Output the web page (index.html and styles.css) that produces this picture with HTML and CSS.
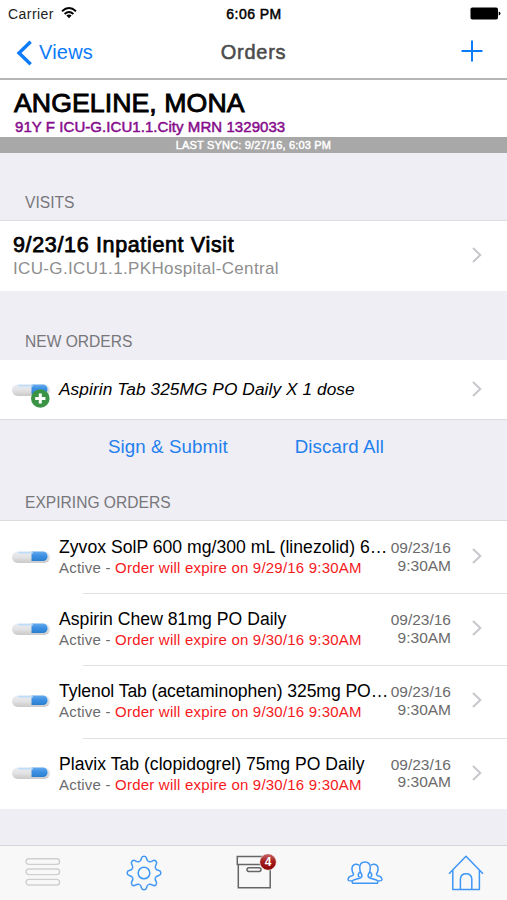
FILE: index.html
```html
<!DOCTYPE html>
<html lang="en">
<head>
<meta charset="utf-8">
<title>Orders</title>
<link rel="stylesheet" href="styles.css">
</head>
<body>
<svg class="defs" width="0" height="0" aria-hidden="true">
  <defs>
    <linearGradient id="shell" x1="0" y1="0" x2="0" y2="1">
      <stop offset="0" stop-color="#e9eef4"/><stop offset=".5" stop-color="#e2e2e3"/><stop offset="1" stop-color="#c9c9ca"/>
    </linearGradient>
    <linearGradient id="blue" x1="0" y1="0" x2="0" y2="1">
      <stop offset="0" stop-color="#65aaf0"/><stop offset=".45" stop-color="#3d91e3"/><stop offset="1" stop-color="#2b7fce"/>
    </linearGradient>
    <linearGradient id="red" x1="0" y1="0" x2="0" y2="1">
      <stop offset="0" stop-color="#c96a6a"/><stop offset=".48" stop-color="#a51a1c"/><stop offset="1" stop-color="#8b0508"/>
    </linearGradient>
    <symbol id="pill" viewBox="0 0 40 30">
      <rect x="1" y="9.5" width="38" height="11.5" rx="5.7" fill="url(#shell)"/>
      <path d="M20.5 9.5h12.5q3.5 1 3.5 4.7t-3.5 4.8H20.5z" fill="url(#blue)"/>
      <path d="M8 10.7h13" stroke="#bfdcf7" stroke-width="1.8" stroke-linecap="round"/>
    </symbol>
    <symbol id="chevron" viewBox="0 0 12 18">
      <path d="M2 2l7.3 7L2 16" fill="none" stroke="#c7c7cc" stroke-width="2"/>
    </symbol>
    <path id="tooth" d="M-4.7-11.4C-3.1-12.06-2.9-13-2.5-14.8Q-2.1-16.8 0-16.8Q2.1-16.8 2.5-14.8C2.9-13 3.1-12.06 4.7-11.4"/>
  </defs>
</svg>
<div class="screen">
  <header class="top">
    <div class="status">
      <div class="carrier"><span>Carrier</span>
        <svg width="16" height="12" viewBox="0 0 16 12" fill="none" stroke="#000" stroke-width="1.9"><path d="M1 4.2Q8-2.1 15 4.2M3.6 7Q8 3 12.4 7"/><path d="M8 11.2L5.4 8.6Q8 6.6 10.6 8.6z" fill="#000" stroke="none"/></svg>
      </div>
      <div class="time">6:06 PM</div>
      <svg class="battery" width="31" height="13" viewBox="0 0 31 13"><rect x="0.5" y="0.5" width="27.5" height="12" rx="1.8"/><path d="M28.7 4.5q1.8.3 1.8 2t-1.8 2z"/></svg>
    </div>
    <nav class="nav">
      <a class="back"><svg width="17" height="26" viewBox="0 0 17 26"><path d="M14.7 1.7L3 13l11.7 11.3" fill="none" stroke="#0c7bfa" stroke-width="3.4"/></svg><span>Views</span></a>
      <h1>Orders</h1>
      <svg class="add" width="22" height="22" viewBox="0 0 22 22"><path d="M11 .5v21M.5 11h21" stroke="#0c7bfa" stroke-width="2"/></svg>
    </nav>
  </header>
  <section class="patient">
    <h2>ANGELINE, MONA</h2>
    <p>91Y F ICU-G.ICU1.1.City MRN 1329033</p>
  </section>
  <div class="sync">LAST SYNC: 9/27/16, 6:03 PM</div>
  <h3 class="label visits">VISITS</h3>
  <div class="visit">
    <div class="visit-text"><div class="visit-title">9/23/16 Inpatient Visit</div><div class="visit-place">ICU-G.ICU1.1.PKHospital-Central</div></div>
    <svg class="chev"><use href="#chevron"/></svg>
  </div>
  <h3 class="label new">NEW ORDERS</h3>
  <div class="order new-order">
    <svg class="pill"><use href="#pill"/><circle cx="29.3" cy="23.5" r="9.3" fill="#3b9445"/><path d="M29.3 18.4v10.2M24.2 23.5h10.2" stroke="#fff" stroke-width="3"/></svg>
    <div class="draft">Aspirin Tab 325MG PO Daily X 1 dose</div>
    <svg class="chev"><use href="#chevron"/></svg>
  </div>
  <div class="actions"><a>Sign &amp; Submit</a><a>Discard All</a></div>
  <h3 class="label expiring">EXPIRING ORDERS</h3>
  <div class="list">
    <div class="order">
      <svg class="pill"><use href="#pill"/></svg>
      <div class="info"><div class="name">Zyvox SolP 600 mg/300 mL (linezolid) 6…</div><div class="state">Active - <em>Order will expire on 9/29/16 9:30AM</em></div></div>
      <div class="date">09/23/16<br>9:30AM</div>
      <svg class="chev"><use href="#chevron"/></svg>
    </div>
    <div class="order">
      <svg class="pill"><use href="#pill"/></svg>
      <div class="info"><div class="name">Aspirin Chew 81mg PO Daily</div><div class="state">Active - <em>Order will expire on 9/30/16 9:30AM</em></div></div>
      <div class="date">09/23/16<br>9:30AM</div>
      <svg class="chev"><use href="#chevron"/></svg>
    </div>
    <div class="order">
      <svg class="pill"><use href="#pill"/></svg>
      <div class="info"><div class="name tight">Tylenol Tab (acetaminophen) 325mg PO…</div><div class="state">Active - <em>Order will expire on 9/30/16 9:30AM</em></div></div>
      <div class="date">09/23/16<br>9:30AM</div>
      <svg class="chev"><use href="#chevron"/></svg>
    </div>
    <div class="order">
      <svg class="pill"><use href="#pill"/></svg>
      <div class="info"><div class="name">Plavix Tab (clopidogrel) 75mg PO Daily</div><div class="state">Active - <em>Order will expire on 9/30/16 9:30AM</em></div></div>
      <div class="date">09/23/16<br>9:30AM</div>
      <svg class="chev"><use href="#chevron"/></svg>
    </div>
  </div>
  <footer class="tabs">
    <svg width="36" height="36" viewBox="0 0 36 36" fill="none" stroke="#cfcfcf" stroke-width="1.4"><rect x="1" y="4.8" width="33.6" height="5.6" rx="2.8"/><rect x="1" y="15" width="33.6" height="5.6" rx="2.8"/><rect x="1" y="25.4" width="33.6" height="5.6" rx="2.8"/></svg>
    <svg width="36" height="36" viewBox="-18 -18 36 36" fill="none" stroke="#3f96f5" stroke-width="1.5"><use href="#tooth"/><use href="#tooth" transform="rotate(45)"/><use href="#tooth" transform="rotate(90)"/><use href="#tooth" transform="rotate(135)"/><use href="#tooth" transform="rotate(180)"/><use href="#tooth" transform="rotate(225)"/><use href="#tooth" transform="rotate(270)"/><use href="#tooth" transform="rotate(315)"/><circle r="5.8"/></svg>
    <div class="box">
      <svg width="36" height="36" viewBox="0 0 36 36" fill="none" stroke="#666" stroke-width="1.5"><path d="M1.3 2.5h33v8h-33zM2.3 10.5v23.3h31.9V10.5"/><rect x="11" y="13.7" width="14" height="3.8" rx="1.9"/></svg>
      <span class="badge"><svg width="18" height="18" viewBox="0 0 18 18"><circle cx="9" cy="9" r="8.3" fill="url(#red)" stroke="#fff" stroke-width=".6"/></svg><b>4</b></span>
    </div>
    <svg width="36" height="36" viewBox="0 0 36 36" fill="none" stroke="#3f96f5" stroke-width="1.5" stroke-linejoin="round"><path d="M5.5 28.2Q4.2 25.6 7.3 24.7L12.5 23.3Q15.6 22.3 14.8 19.8Q12.5 17 12.7 12.2Q13 6.9 18 6.9T23.3 12.2Q23.5 17 21.2 19.8Q20.4 22.3 23.5 23.3L28.7 24.7Q31.8 25.6 30.5 28.2z"/><path d="M12.3 10.6Q10.9 8.8 8.4 9.3Q4.6 10.2 5 14.6Q5.2 17 6.4 18.7Q7 20.4 3.4 21.3Q.7 22.3 1.2 25Q1.3 26.1 4.8 25.8M12.6 17Q12.1 18.2 11.3 19.2Q10.9 21.3 12.7 22.2M23.7 10.6Q25.1 8.8 27.6 9.3Q31.4 10.2 31 14.6Q30.8 17 29.6 18.7Q29 20.4 32.6 21.3Q35.3 22.3 34.8 25Q34.7 26.1 31.2 25.8M23.4 17Q23.9 18.2 24.7 19.2Q25.1 21.3 23.3 22.2"/></svg>
    <svg width="36" height="36" viewBox="0 0 36 36" fill="none" stroke="#3f96f5" stroke-width="1.5" stroke-linejoin="round"><path d="M1 18.8L18 1.2l17 17.6M4.8 15.2v19.3h26.6V15.2M12.4 34.5V24Q12.8 18.8 18.1 18.8T23.8 24v10.5"/></svg>
  </footer>
</div>
</body>
</html>
```

FILE: styles.css
```css
* { box-sizing: border-box; margin: 0; padding: 0; }
body {
  width: 507px;
  height: 900px;
  overflow: hidden;
  background: #efeef4;
  color: #000;
  font-family: "Liberation Sans", Arial, sans-serif;
}
svg { display: block; flex: none; }
.defs { position: absolute; }
.screen { display: flex; flex-direction: column; height: 900px; }

.top { height: 80px; background: #fff; border-bottom: 2px solid #b5b5b5; }
.status {
  display: grid;
  grid-template-columns: 1fr auto 1fr;
  align-items: center;
  height: 27px;
  padding: 0 7px 0 8px;
  font-size: 14px;
  letter-spacing: .45px;
}
.carrier { display: flex; align-items: center; gap: 7px; color: #222; }
.carrier svg { margin-top: -2px; }
.time { -webkit-text-stroke: .5px #000; }
.battery { justify-self: end; margin-right: -1px; }
.nav {
  display: grid;
  grid-template-columns: 1fr auto 1fr;
  align-items: center;
  height: 51px;
  padding: 0 24px 0 16px;
}
.back { display: flex; align-items: center; gap: 6px; color: #0c7bfa; font-size: 20px; letter-spacing: .2px; }
.nav h1 { color: #4c4c4c; font-size: 20px; font-weight: 400; letter-spacing: .75px; -webkit-text-stroke: .55px #4c4c4c; margin-left: 8px; }
.add { justify-self: end; margin-top: -3px; }

.patient { height: 57px; padding: 8px 14px 0; background: #fff; }
.patient h2 { font-size: 26.7px; font-weight: 400; line-height: 31px; letter-spacing: .05px; -webkit-text-stroke: .9px #000; }
.patient p { padding-left: 1px; color: #860b8b; font-size: 15px; line-height: 16px; letter-spacing: .06px; -webkit-text-stroke: .5px #860b8b; }
.sync {
  height: 16px;
  background: #a8a8a8;
  color: #fff;
  font-size: 11px;
  line-height: 17px;
  letter-spacing: .17px;
  text-align: center;
  -webkit-text-stroke: .45px #fff;
}

.label { padding-left: 25px; color: #77777b; font-size: 15.6px; font-weight: 400; line-height: 18px; }
.visits { height: 67px; padding-top: 41px; }
.new { height: 69px; padding-top: 42px; }
.expiring { height: 48px; padding-top: 22px; }

.visit {
  display: flex;
  justify-content: space-between;
  align-items: center;
  height: 71px;
  padding: 0 24px 0 13px;
  background: #fff;
  border-top: 1px solid #dddde1;
}
.visit-text { padding-top: 1px; }
.visit-title { font-size: 21.5px; line-height: 25px; letter-spacing: .65px; -webkit-text-stroke: .75px #000; }
.visit-place { color: #8e8e8e; font-size: 17px; line-height: 22px; letter-spacing: .35px; }
.chev { width: 12px; height: 18px; margin-top: -2px; }
.pill { width: 40px; height: 30px; }

.order { display: flex; align-items: center; padding: 0 24px 0 11px; background: #fff; }
.new-order { height: 60px; border-bottom: 1px solid #dcdce0; }
.new-order .pill { margin-top: 1px; overflow: visible; }
.draft { flex: 1; padding-left: 8px; font-size: 17.3px; letter-spacing: .07px; font-style: italic; }
.actions { display: flex; gap: 67px; height: 52px; padding: 16px 0 0 108px; color: #1f80ee; font-size: 18.7px; line-height: 21px; letter-spacing: .1px; }

.list { height: 289px; background: #fff; border-top: 1px solid #dcdce0; }
.list .order { height: 72.3px; margin-top: -.1px; }
.list .order + .order {
  background: linear-gradient(#e1e1e4, #e1e1e4) 83px 0 / 424px 1px no-repeat;
}
.list .pill { margin-top: -1px; }
.info { flex: none; width: 331px; padding: 0 0 0 8px; white-space: nowrap; }
.name { font-size: 17.6px; line-height: 21px; letter-spacing: .02px; }
.name.tight { letter-spacing: -.08px; }
.state { color: #6b6b6b; font-size: 15px; line-height: 19px; letter-spacing: .21px; }
.state em { color: #f6191c; font-style: normal; }
.date { flex: 1; color: #6b6b6b; font-size: 15.5px; line-height: 17.5px; text-align: right; margin: -1px 20px 0 0; }

.tabs {
  display: grid;
  grid-template-columns: 101.5px 110px 111px 100.5px 36px;
  height: 55px;
  margin-top: auto;
  padding: 9px 0 0 24.5px;
  background: #f8f8f8;
  border-top: 1px solid #d4d4d9;
}
.tabs > svg:nth-child(1) { margin-top: -1px; }
.tabs > svg:nth-child(2), .tabs > svg:nth-child(5) { margin-top: -.5px; }
.box { position: relative; margin-top: -1px; }
.badge { position: absolute; top: -1px; left: 23px; }
.badge b { position: absolute; inset: 0; color: #fff; font-size: 12px; line-height: 18px; text-align: center; }
```
